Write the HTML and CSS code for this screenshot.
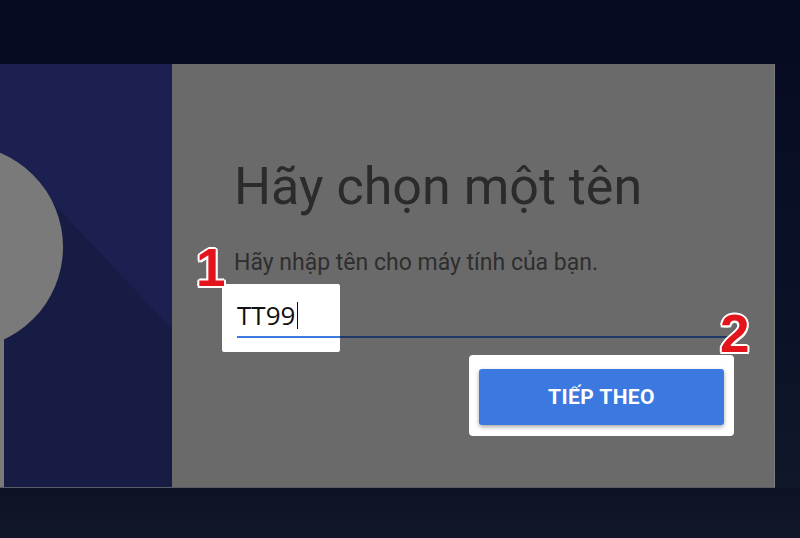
FILE: index.html
```html
<!DOCTYPE html>
<html lang="vi">
<head>
<meta charset="utf-8">
<title>Hãy chọn một tên</title>
<link rel="stylesheet" href="styles.css">
</head>
<body>
<div class="screen">
  <div class="top"></div>
  <div class="row">
    <div class="window">
      <div class="side">
        <svg class="side-art" width="172" height="424" viewBox="0 0 172 424" xmlns="http://www.w3.org/2000/svg">
          <rect x="0" y="0" width="172" height="424" fill="#171c45"/>
          <polygon points="0,0 172,0 172,265 53,139 -39,183 0,183" fill="#1b2051"/>
          <rect x="0" y="240" width="4" height="184" fill="#7a7a7a"/>
          <circle cx="-39" cy="183" r="102" fill="#7a7a7a"/>
        </svg>
      </div>
      <div class="main">
        <h1 class="title">Hãy chọn một tên</h1>
        <p class="sub">Hãy nhập tên cho máy tính của bạn.</p>
        <div class="field">
          <div class="field-hl">
            <div class="field-text">TT99<span class="caret"></span></div>
          </div>
          <div class="field-line"></div>
        </div>
        <div class="actions">
          <div class="btn-hl"><button class="btn" type="button">TIẾP THEO</button></div>
        </div>
        <span class="mark mark-1">1</span>
        <span class="mark mark-2">2</span>
      </div>
    </div>
    <div class="edge"></div>
  </div>
  <div class="bottom"></div>
</div>
</body>
</html>
```
FILE: styles.css
```css
* { box-sizing: border-box; }
html, body { margin: 0; padding: 0; }
body {
  width: 800px;
  height: 538px;
  overflow: hidden;
  background: #060b22;
  font-family: Roboto, "Noto Sans", Arial, sans-serif;
}
.screen {
  width: 800px;
  height: 538px;
  display: flex;
  flex-direction: column;
}
.top {
  height: 64px;
  background: #060b22;
}
.row {
  display: flex;
  height: 424px;
}
.window {
  width: 775px;
  display: flex;
  border-right: 1px solid #7c7c7e;
  border-bottom: 1px solid #5a5c66;
}
.side {
  width: 172px;
  flex: none;
  overflow: hidden;
  background: #171c45;
}
.side-art { display: block; }
.main {
  position: relative;
  flex: 1;
  background: #6a6a6a;
  padding: 91px 0 0 62px;
  display: flex;
  flex-direction: column;
}
.title {
  margin: 0;
  font-family: Roboto, sans-serif;
  font-weight: 400;
  font-size: 52px;
  line-height: 63px;
  color: #2b2b2b;
}
.sub {
  margin: 31px 0 0;
  font-family: Roboto, sans-serif;
  font-size: 23px;
  line-height: 27px;
  color: #2e2e2e;
}
.field {
  margin: 8px 0 0 -12px;
  width: 506px;
  display: flex;
  align-items: flex-end;
}
.field-hl {
  width: 118px;
  flex: none;
  background: #ffffff;
  border-radius: 2px;
  padding: 14px 0 14px 15px;
}
.field-text {
  font-family: "Open Sans", sans-serif;
  font-size: 26px;
  line-height: 35px;
  color: #111111;
  padding-bottom: 3px;
  border-bottom: 2px solid #3b7be0;
  display: flex;
  align-items: center;
}
.caret {
  display: inline-block;
  width: 1px;
  height: 27px;
  background: #111;
  margin-left: 2px;
}
.field-line {
  flex: 1;
  height: 2px;
  margin-bottom: 14px;
  background: #1f3767;
}
.actions {
  display: flex;
  justify-content: flex-end;
  padding-right: 40px;
  margin-top: 3px;
}
.btn-hl {
  background: #ffffff;
  border-radius: 4px;
  padding: 14px 10px 11px;
}
.btn {
  display: block;
  width: 245px;
  height: 56px;
  border: none;
  border-radius: 3px;
  background: #3b78e0;
  color: #ffffff;
  font-family: Roboto, sans-serif;
  font-weight: 700;
  font-size: 21px;
  letter-spacing: 0.4px;
  box-shadow: 0 2px 4px rgba(0, 0, 0, 0.35);
}
.mark {
  position: absolute;
  font-family: "Liberation Sans", Arial, sans-serif;
  font-weight: 700;
  font-size: 53px;
  line-height: 1;
  color: #e3141b;
  text-shadow:
    2px 0 0 #fff, -2px 0 0 #fff, 0 2px 0 #fff, 0 -2px 0 #fff,
    1.5px 1.5px 0 #fff, -1.5px 1.5px 0 #fff, 1.5px -1.5px 0 #fff, -1.5px -1.5px 0 #fff;
}
.mark-1 { left: 24px; top: 177px; }
.mark-2 { left: 548px; top: 243px; }
.edge {
  flex: 1;
  background: linear-gradient(180deg, #070c24 0%, #0b1228 60%, #101729 100%);
}
.bottom {
  flex: 1;
  background: linear-gradient(180deg, #0d1324 0%, #111829 100%);
}
```
